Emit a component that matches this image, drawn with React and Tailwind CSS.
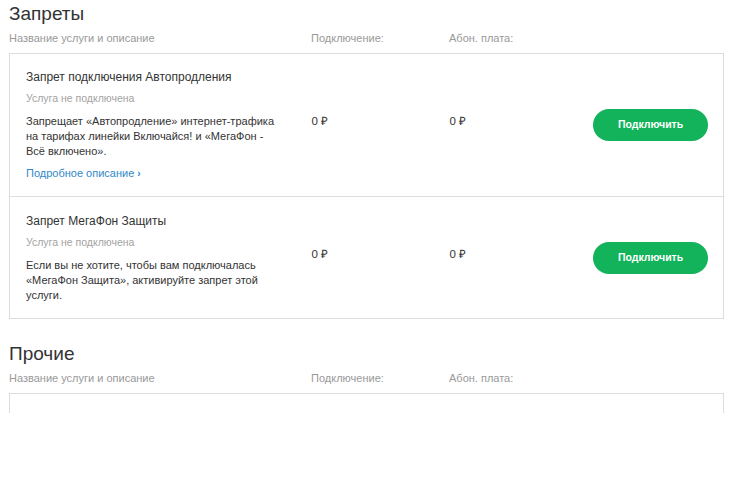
const font = { fontFamily: '"Liberation Sans", Arial, sans-serif' }

const bans = [
  {
    title: 'Запрет подключения Автопродления',
    status: 'Услуга не подключена',
    text: 'Запрещает «Автопродление» интернет-трафика на тарифах линейки Включайся! и «МегаФон - Всё включено».',
    more: true,
  },
  {
    title: 'Запрет МегаФон Защиты',
    status: 'Услуга не подключена',
    text: 'Если вы не хотите, чтобы вам подключалась «МегаФон Защита», активируйте запрет этой услуги.',
    more: false,
  },
]

function Header({ title }) {
  return (
    <div>
      <h2 className="text-[19px] leading-[24px] text-[#333] pl-[9px]">{title}</h2>
      <div className="flex text-[11px] leading-[14px] text-[#999] mt-[5px] mb-[8px] pl-[9px]">
        <div className="w-[302px]">Название услуги и описание</div>
        <div className="w-[138px]">Подключение:</div>
        <div>Абон. плата:</div>
      </div>
    </div>
  )
}

function ServiceRow({ item, last }) {
  return (
    <div className={`flex items-center pl-[16px] pr-[15px] ${item.more ? 'pt-[15px] pb-[15px]' : 'pt-[16px] pb-[15px]'} ${last ? '' : 'border-b border-[#dedede]'}`}>
      <div className="w-[286px]">
        <div className="text-[12px] leading-[16px] text-[#333]">{item.title}</div>
        <div className="text-[10.5px] leading-[14px] text-[#a3a3a3] mt-[6px]">{item.status}</div>
        <div className="text-[11px] leading-[15px] text-[#333] mt-[9px] w-[250px]">{item.text}</div>
        {item.more && (
          <div className="text-[11px] leading-[14px] text-[#2f89c9] mt-[7px]">
            Подробное описание <span className="font-bold text-[10px]">›</span>
          </div>
        )}
      </div>
      <div className="w-[138px] text-[11.5px] text-[#333] pb-[7px]">0 ₽</div>
      <div className="w-[144px] text-[11.5px] text-[#333] pb-[7px]">0 ₽</div>
      <button className="ml-auto w-[115px] h-[32px] rounded-full bg-[#12b35a] text-white text-[10.5px] font-semibold">
        Подключить
      </button>
    </div>
  )
}

export default function App() {
  return (
    <div className="w-[730px] h-[482px] bg-white overflow-hidden pt-[2px]" style={font}>
      <Header title="Запреты" />
      <div className="mx-[9px] w-[715px] border border-[#dcdcdc]">
        {bans.map((item, i) => (
          <ServiceRow key={item.title} item={item} last={i === bans.length - 1} />
        ))}
      </div>
      <div className="mt-[23px]">
        <Header title="Прочие" />
      </div>
      <div className="mx-[9px] w-[715px] h-[20px] border-x border-t border-[#dcdcdc]" />
    </div>
  )
}
